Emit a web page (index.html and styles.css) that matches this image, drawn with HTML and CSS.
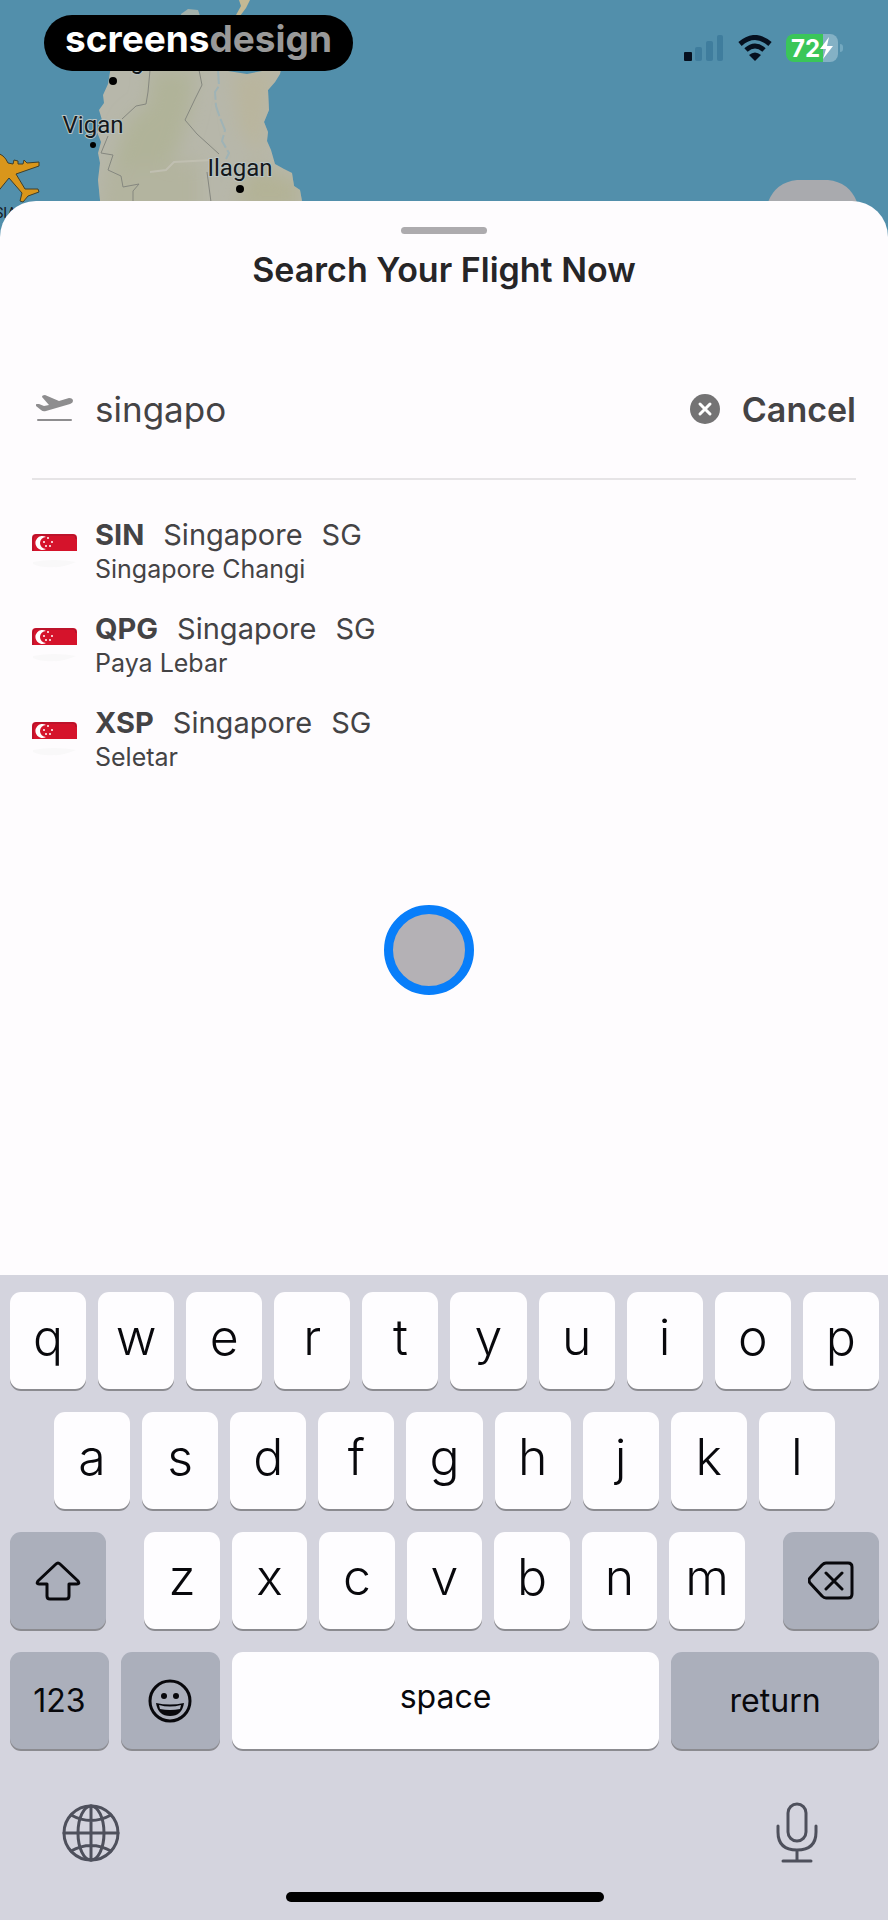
FILE: index.html
```html
<!DOCTYPE html>
<html lang="en">
<head>
    <meta charset="utf-8">
    <meta name="viewport" content="width=device-width, initial-scale=1">
    <title>Search Your Flight Now</title>
    <link rel="stylesheet" href="styles.css">
</head>
<body>

<svg class="map" viewBox="0 0 888 250" preserveAspectRatio="xMinYMin slice" aria-hidden="true">
  <defs>
    <filter id="soft"><feGaussianBlur stdDeviation="9"/></filter>
    <clipPath id="land">
      <path d="M112 60 L108 84 L103 95 L104 103 L99 110 L102 120 L97 132 L101 142 L98 153 L100 163 L98 180 L100 200 L100 250 L304 250 L302 201 L300 190 L294 186 L292 173 L284 169 L275 164 L271 150 L267 141 L268 132 L264 122 L269 110 L268 90 L275 82 L280 74 L283 60Z"/>
    </clipPath>
  </defs>
  <!-- islands at the top edge -->
  <path d="M181 14 L188 9 L198 10 L200 16 L182 20Z" fill="#a3b1ab"/>
  <path d="M236 15 L241 6 L239 0 L250 0 L246 8 L240 16Z" fill="#c3b994"/>
  <!-- Luzon -->
  <g clip-path="url(#land)">
    <rect x="90" y="50" width="220" height="200" fill="#b7b7aa"/>
    <g filter="url(#soft)">
      <path d="M152 70 L195 70 L190 110 L178 150 L150 185 L112 165 L128 120 L148 105Z" fill="#b0b399"/>
      <path d="M232 72 L285 72 L268 90 L262 160 L240 130Z" fill="#b9b59d"/>
      <path d="M105 170 L200 160 L200 220 L100 220Z" fill="#b3b49f"/>
      <path d="M250 165 L300 180 L300 210 L235 210Z" fill="#b3b296"/>
    </g>
    <g fill="none" stroke="#85877f" stroke-width="1">
      <path d="M150 70 L148 92 L146 104 L136 106 L122 119"/>
      <path d="M199 70 L202 85 L195 99 L185 120 L197 134 L219 154"/>
      <path d="M108 136 L101 153 L113 155 L108 170 L121 176 L123 187 L139 184 L133 191 L133 202"/>
      <path d="M207 172 L211 202"/>
    </g>
    <path d="M218 70 L219 86 L215 92 L216 106 L220 118 L225 130 L222 141 L229 153 L226 159" fill="none" stroke="#9fb3b6" stroke-width="2" stroke-dasharray="14 3"/>
    <path d="M150 172 L166 170 L174 162 L212 160" fill="none" stroke="#c0bfb1" stroke-width="2"/>
  </g>
  <path d="M218 68 L228 71 L247 74 L262 71 L262 66 L218 66Z" fill="#528fab"/>
  <g class="map-label">
    <text x="144" y="69" text-anchor="end">Laoag</text>
    <text x="93" y="133" text-anchor="middle">Vigan</text>
    <text x="240" y="176" text-anchor="middle">Ilagan</text>
    <text x="-5" y="218" class="small">SIA</text>
  </g>
  <circle cx="113" cy="81" r="4"/>
  <circle cx="93" cy="145" r="3"/>
  <circle cx="240" cy="189" r="4"/>
  <path d="M-4 153 Q4 154 8 163 L13 164 L14 160 L18 161 L18 164 L23 164 L24 160 L27 163 L39 162 L39 166 L16 174 L25 189 L38 189 L39 192 L28 196 L23 202 L20 201 L22 193 L9 178 L-4 194Z" fill="#d9961b" stroke="#3e3f2c" stroke-width="1"/>
  <path d="M768 202 Q776 182 797 180 L828 180 Q849 182 857 202Z" fill="#a9aaae"/>
</svg>

<div class="topbar">
  <div class="logo">screens<span>design</span></div>
  <div class="status">
    <svg width="40" height="26" viewBox="0 0 40 26" role="img" aria-label="Signal">
      <rect x="0" y="17" width="8" height="9" rx="1" fill="#06101f"/>
      <g fill="#3f7d9d">
        <rect x="11" y="12" width="7" height="14" rx="2"/>
        <rect x="22" y="6" width="7" height="20" rx="2"/>
        <rect x="33" y="0" width="6" height="26" rx="2"/>
      </g>
    </svg>
    <svg width="34" height="26" viewBox="0 0 34 26" role="img" aria-label="Wi-Fi">
      <g fill="none" stroke="#06101f" stroke-width="5">
        <path d="M2 9 Q17 -4 32 9"/>
        <path d="M8 15 Q17 7 26 15"/>
      </g>
      <path d="M11 20 Q17 15 23 20 L17 26Z" fill="#06101f"/>
    </svg>
    <div class="battery">
      <span>72</span>
      <svg width="13" height="22" viewBox="0 0 13 22" aria-hidden="true">
        <path d="M9 0 L0 12 L6 12 L3 22 L13 9 L7 9Z" fill="#fff"/>
      </svg>
    </div>
  </div>
</div>

<main class="sheet">
  <div class="handle"></div>
  <h1>Search Your Flight Now</h1>

  <form class="search">
    <label for="airport">
      <svg width="38" height="28" viewBox="0 0 38 28" role="img" aria-label="Departure airport">
        <path d="M0 11 Q-1 9 1 9 L3 9 L8 11 L13 10 L6 2 Q6 0 9 0 L23 6 L33 3 Q37 3 37 6 Q37 8 34 9 L10 16 Q7 17 5 15Z" fill="#8e8d8f"/>
        <path d="M2 25 H35" stroke="#8e8d8f" stroke-width="2" stroke-linecap="round"/>
      </svg>
    </label>
    <input type="text" id="airport" name="airport" value="singapo">
    <button type="reset" class="clear" aria-label="Clear">
      <svg width="30" height="30" viewBox="0 0 30 30">
        <circle cx="15" cy="15" r="15" fill="#747374"/>
        <path d="M10 10 L20 20 M20 10 L10 20" stroke="#fff" stroke-width="3" stroke-linecap="round"/>
      </svg>
    </button>
    <button type="button" class="cancel">Cancel</button>
  </form>

  <svg width="0" height="0" class="defs" aria-hidden="true">
    <symbol id="flag" viewBox="0 0 45 36">
      <path d="M0 17 V4 Q0 0 4 0 H41 Q45 0 45 4 V17Z" fill="#d5132b"/>
      <path d="M1 17 V5 Q1 1 4 1 H41 Q44 1 44 5" fill="none" stroke="#a5152d" stroke-width="1"/>
      <path d="M14 3 A7 7 0 1 0 14 15 A6 6 0 0 1 14 3Z" fill="#fff"/>
      <g fill="#fff">
        <circle cx="16" cy="4" r="1"/>
        <circle cx="12" cy="8" r="1"/>
        <circle cx="20" cy="8" r="1"/>
        <circle cx="14" cy="12" r="1"/>
        <circle cx="18" cy="12" r="1"/>
      </g>
      <path d="M1 28 Q22 24 44 28 Q30 34 22 33 Q10 34 1 30Z" fill="#f9f8f9"/>
    </symbol>
  </svg>

  <ul class="results">
    <li>
      <svg class="flag" role="img" aria-label="Singapore"><use href="#flag"/></svg>
      <div>
        <p class="code"><b>SIN</b><span>Singapore</span><span>SG</span></p>
        <p class="name">Singapore Changi</p>
      </div>
    </li>
    <li>
      <svg class="flag" role="img" aria-label="Singapore"><use href="#flag"/></svg>
      <div>
        <p class="code"><b>QPG</b><span>Singapore</span><span>SG</span></p>
        <p class="name">Paya Lebar</p>
      </div>
    </li>
    <li>
      <svg class="flag" role="img" aria-label="Singapore"><use href="#flag"/></svg>
      <div>
        <p class="code"><b>XSP</b><span>Singapore</span><span>SG</span></p>
        <p class="name">Seletar</p>
      </div>
    </li>
  </ul>
  <div class="touch"></div>
</main>

<div class="keyboard">
  <div class="row">
    <button>q</button><button>w</button><button>e</button><button>r</button><button>t</button><button>y</button><button>u</button><button>i</button><button>o</button><button>p</button>
  </div>
  <div class="row middle">
    <button>a</button><button>s</button><button>d</button><button>f</button><button>g</button><button>h</button><button>j</button><button>k</button><button>l</button>
  </div>
  <div class="row">
    <button class="dark shift" aria-label="Shift">
      <svg width="46" height="40" viewBox="0 0 46 40">
        <path d="M21 3 Q23 1 25 3 L43 20 Q45 23 42 23 H34 V35 Q34 38 31 38 H15 Q12 38 12 35 V23 H4 Q1 23 3 20Z"/>
      </svg>
    </button>
    <button>z</button><button>x</button><button>c</button><button>v</button><button>b</button><button>n</button><button>m</button>
    <button class="dark delete" aria-label="Delete">
      <svg width="46" height="40" viewBox="0 0 46 40">
        <path d="M18 2 H40 Q44 2 44 6 V33 Q44 37 40 37 H18 Q16 37 14 35 L2 22 Q0 19 2 17 L14 4 Q16 2 18 2Z M18 12 L34 28 M34 12 L18 28"/>
      </svg>
    </button>
  </div>
  <div class="row">
    <button class="dark word num">123</button>
    <button class="dark emoji" aria-label="Emoji">
      <svg width="44" height="44" viewBox="0 0 44 44">
        <circle cx="22" cy="22" r="20"/>
        <ellipse cx="16" cy="17" rx="3" ry="3" class="fill"/>
        <ellipse cx="28" cy="17" rx="3" ry="3" class="fill"/>
        <path d="M8 24 Q22 27 36 24 Q34 37 22 37 Q10 37 8 24Z" class="fill"/>
        <path d="M11 26 Q22 29 33 26 L32 30 Q22 32 12 30Z" class="teeth"/>
      </svg>
    </button>
    <button class="word space">space</button>
    <button class="dark word return">return</button>
  </div>
  <div class="bottom">
    <button aria-label="Next keyboard">
      <svg width="58" height="58" viewBox="0 0 58 58">
        <circle cx="29" cy="29" r="27"/>
        <ellipse cx="29" cy="29" rx="13" ry="27"/>
        <path d="M29 2 V56 M2 29 H56 M9 11 Q29 22 49 11 M9 47 Q29 36 49 47"/>
      </svg>
    </button>
    <button aria-label="Dictation">
      <svg width="42" height="62" viewBox="0 0 42 62">
        <rect x="12" y="2" width="18" height="37" rx="9"/>
        <path d="M2 24 V30 Q2 48 21 48 Q40 48 40 30 V24 M21 48 V59 M7 59 H35"/>
      </svg>
    </button>
  </div>
  <div class="home"></div>
</div>

</body>
</html>
```

FILE: styles.css
```css
* {
  box-sizing: border-box;
}

body {
  margin: 0;
  min-height: 100vh;
  display: flex;
  flex-direction: column;
  position: relative;
  background-color: #528fab;
  font-family: Inter, "Liberation Sans", sans-serif;
}

button {
  border: none;
  padding: 0;
  background: none;
  font-family: inherit;
  color: inherit;
  cursor: pointer;
}

svg {
  display: block;
  flex: none;
}

.map {
  position: absolute;
  top: 0;
  left: 0;
  width: 100%;
  height: 250px;
}

.map-label {
  font: 24px Roboto, sans-serif;
  fill: #14181b;
  stroke: #b9c4c4;
  stroke-width: 2px;
  paint-order: stroke;
}

.map-label .small {
  font-size: 14px;
  stroke: none;
}

.topbar {
  position: relative;
  display: flex;
  justify-content: space-between;
  align-items: flex-start;
  height: 201px;
  padding: 15px 44px;
}

.logo {
  height: 56px;
  padding: 0 21px;
  border-radius: 28px;
  background-color: #000;
  color: #fff;
  font-size: 37px;
  font-weight: 700;
  line-height: 48px;
}

.logo span {
  color: #999;
}

.status {
  display: flex;
  align-items: center;
  gap: 14px;
  padding-top: 19px;
}

.battery {
  position: relative;
  display: flex;
  align-items: center;
  justify-content: center;
  width: 52px;
  height: 28px;
  margin-right: 6px;
  border-radius: 8px;
  background: linear-gradient(to right, #3ac659 72%, #84b1c5 72%);
  color: #fff;
  font-size: 24px;
  font-weight: 700;
}

.battery::after {
  content: "";
  position: absolute;
  right: -5px;
  width: 3px;
  height: 8px;
  border-radius: 0 3px 3px 0;
  background-color: #74a9c0;
}

.sheet {
  position: relative;
  flex: 1;
  min-height: 1074px;
  padding: 26px 32px;
  border-radius: 36px 36px 0 0;
  background-color: #fefcfe;
  color: #444345;
}

.handle {
  width: 86px;
  height: 7px;
  margin: 0 auto;
  border-radius: 4px;
  background-color: #adabae;
}

h1 {
  margin: 14px 0 0;
  color: #262527;
  font-size: 34px;
  font-weight: 600;
  line-height: 44px;
  text-align: center;
}

.search {
  display: flex;
  align-items: center;
  height: 140px;
  margin-top: 48px;
  border-bottom: 2px solid #e6e4e6;
}

.search label {
  padding: 0 21px 0 4px;
}

.search input {
  flex: 1;
  min-width: 0;
  padding: 0;
  border: none;
  outline: none;
  background: none;
  color: inherit;
  font-family: inherit;
  font-size: 35px;
}

.cancel {
  margin-left: 22px;
  font-size: 34px;
  font-weight: 600;
}

.defs {
  position: absolute;
}

.results {
  list-style-type: none;
  margin: 37px 0 0;
  padding: 0;
}

.results li {
  display: flex;
  gap: 18px;
  height: 94px;
}

.results p {
  margin: 0;
}

.flag {
  width: 45px;
  height: 36px;
  margin-top: 17px;
}

.code {
  display: flex;
  gap: 19px;
  font-size: 29px;
  line-height: 36px;
}

.name {
  font-size: 25px;
  line-height: 32px;
}

/* where the finger is */
.touch {
  position: absolute;
  left: 384px;
  top: 704px;
  width: 90px;
  height: 90px;
  border: 9px solid #087efa;
  border-radius: 50%;
  background-color: #b4b1b5;
}

.keyboard {
  position: relative;
  padding: 17px 9px 18px 10px;
  background-color: #d4d4de;
  color: #08080c;
}

.row {
  display: flex;
  gap: 12px;
  margin-bottom: 23px;
}

.middle {
  padding: 0 44px;
}

.row button {
  display: flex;
  align-items: center;
  justify-content: center;
  flex: 76 1 0;
  height: 97px;
  padding-bottom: 8px;
  border-radius: 11px;
  background-color: #fefdff;
  box-shadow: 0 2px 0 #8b8b90;
  font-size: 50px;
  font-weight: 350;
}

.row .dark {
  padding-bottom: 0;
  background-color: #abafbb;
}

.row .word {
  font-size: 32px;
  font-weight: 400;
}

.row .shift {
  flex-grow: 97;
  margin-right: 26px;
}

.row .delete {
  flex-grow: 97;
  margin-left: 26px;
}

.row .num, .row .emoji {
  flex-grow: 99;
}

.row .space {
  flex-grow: 428;
}

.row .return {
  flex-grow: 208;
}

.keyboard svg {
  fill: none;
  stroke: #08080c;
  stroke-width: 3;
  stroke-linecap: round;
  stroke-linejoin: round;
}

.keyboard svg .fill {
  fill: #08080c;
  stroke: none;
}

.keyboard svg .teeth {
  fill: #abafbb;
  stroke: none;
}

.bottom {
  display: flex;
  justify-content: space-between;
  align-items: center;
  padding: 30px 61px 28px 52px;
}

.bottom svg {
  stroke: #4e505c;
}

.home {
  width: 318px;
  height: 10px;
  margin: 0 auto;
  border-radius: 5px;
  background-color: #000;
}
```
